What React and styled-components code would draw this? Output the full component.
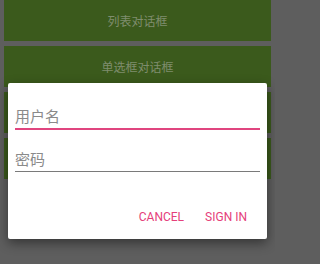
import React from "react";
import styled, { createGlobalStyle } from "styled-components";

const items = ["列表对话框", "单选框对话框", "多选框对话框", "自定义对话框"];

export default function App() {
  return (
    <>
      <GlobalStyle />
      <Screen>
        <ButtonList>
          {items.map((label) => (
            <MenuButton key={label}>{label}</MenuButton>
          ))}
        </ButtonList>

        <Dialog>
          <Field $focused>用户名</Field>
          <Field>密码</Field>
          <Actions>
            <TextButton>CANCEL</TextButton>
            <TextButton>SIGN IN</TextButton>
          </Actions>
        </Dialog>
      </Screen>
    </>
  );
}

const GlobalStyle = createGlobalStyle`
  html, body {
    margin: 0;
    padding: 0;
    background: #5e5e5e;
  }
  * {
    box-sizing: border-box;
  }
`;

const Screen = styled.div`
  position: relative;
  width: 275px;
  height: 264px;
  overflow: hidden;
  background: #5e5e5e;
`;

const ButtonList = styled.div`
  display: flex;
  flex-direction: column;
  gap: 5px;
  padding: 0 4px;
`;

const MenuButton = styled.div`
  height: 41px;
  display: flex;
  align-items: center;
  justify-content: center;
  background: #3b5a1c;
  color: #7f8d6e;
  font-family: "Noto Sans CJK SC", sans-serif;
  font-size: 12px;
`;

const Dialog = styled.div`
  position: absolute;
  left: 8px;
  top: 83px;
  width: 259px;
  height: 156px;
  background: #ffffff;
  border-radius: 2px;
  box-shadow: 0 4px 12px rgba(0, 0, 0, 0.45);
  padding: 23px 7px 0 7px;
  display: flex;
  flex-direction: column;
`;

const Field = styled.div`
  height: ${(p) => (p.$focused ? "24px" : "23px")};
  padding-bottom: 2px;
  line-height: 20px;
  font-family: "Noto Sans CJK SC", sans-serif;
  font-size: 15px;
  color: #8a8a8a;
  border-bottom: ${(p) => (p.$focused ? "2px solid #e0457f" : "1px solid #7a7a7a")};
  margin-bottom: 19px;
`;

const Actions = styled.div`
  display: flex;
  justify-content: flex-end;
  align-items: center;
  gap: 21px;
  padding-right: 13px;
  margin-top: 19px;
`;

const TextButton = styled.div`
  font-family: Roboto, "Liberation Sans", sans-serif;
  font-weight: 400;
  font-size: 12px;
  line-height: 14px;
  color: #e5407a;
`;
